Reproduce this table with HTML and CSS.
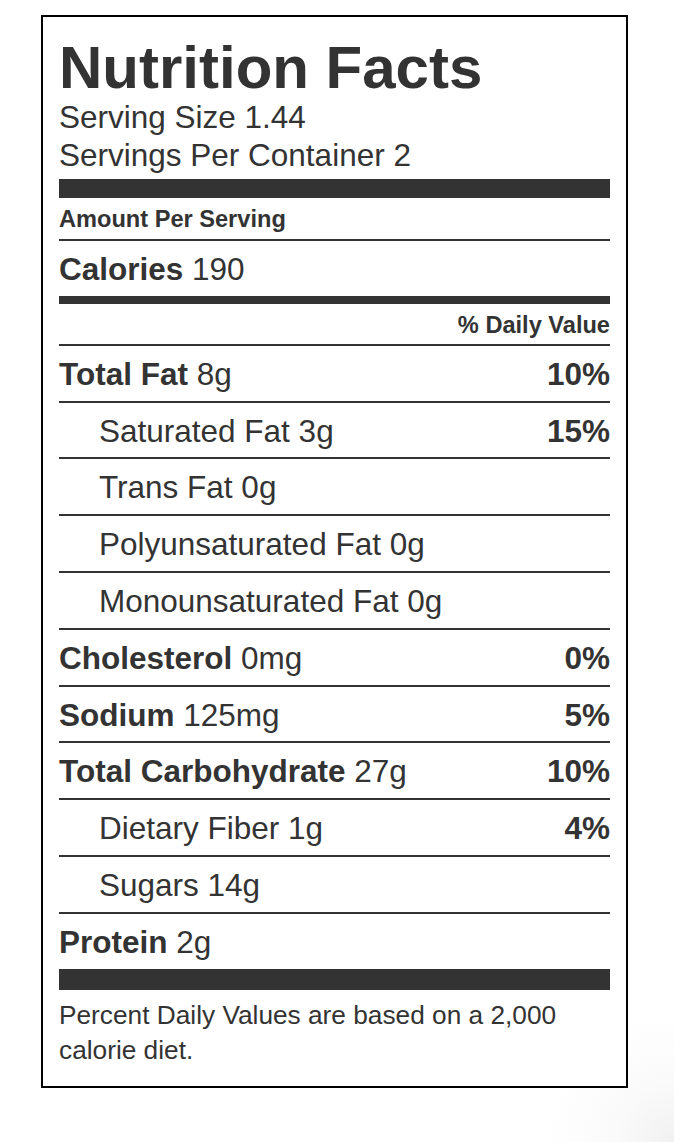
FILE: index.html
```html
<!DOCTYPE html>
<html lang="en">
<head>
<meta charset="utf-8">
<title>Nutrition Facts</title>
<link rel="stylesheet" href="styles.css">
</head>
<body>
<section class="label">
  <h1 class="title">Nutrition Facts</h1>
  <p class="serving">Serving Size 1.44</p>
  <p class="serving">Servings Per Container 2</p>
  <div class="bar bar-lg"></div>
  <div class="amount">Amount Per Serving</div>
  <div class="row"><span><b>Calories</b> 190</span></div>
  <div class="bar bar-md"></div>
  <div class="dv-head">% Daily Value</div>
  <div class="row"><span><b>Total Fat</b> 8g</span><b>10%</b></div>
  <div class="row sub"><span>Saturated Fat 3g</span><b>15%</b></div>
  <div class="row sub"><span>Trans Fat 0g</span></div>
  <div class="row sub"><span>Polyunsaturated Fat 0g</span></div>
  <div class="row sub"><span>Monounsaturated Fat 0g</span></div>
  <div class="row"><span><b>Cholesterol</b> 0mg</span><b>0%</b></div>
  <div class="row"><span><b>Sodium</b> 125mg</span><b>5%</b></div>
  <div class="row"><span><b>Total Carbohydrate</b> 27g</span><b>10%</b></div>
  <div class="row sub"><span>Dietary Fiber 1g</span><b>4%</b></div>
  <div class="row sub"><span>Sugars 14g</span></div>
  <div class="row"><span><b>Protein</b> 2g</span></div>
  <div class="bar bar-xl"></div>
  <p class="footnote">Percent Daily Values are based on a 2,000 calorie diet.</p>
</section>
</body>
</html>
```

FILE: styles.css
```css
html {
  background: radial-gradient(circle at 100% 100%, #f1f1f1 0, #fafafa 60px, #ffffff 130px);
  min-height: 100%;
}

body {
  margin: 0;
  padding: 15px 0 0 41px;
  font-family: "Liberation Sans", Arial, Helvetica, sans-serif;
  color: #333333;
}

.label {
  width: 551px;
  border: 2px solid #000000;
  background: #ffffff;
  padding: 21px 16px 18px 16px;
}

.title {
  margin: 0;
  font-size: 60px;
  line-height: 60px;
  font-weight: 700;
}

.serving {
  margin: 0;
  font-size: 31.5px;
  line-height: 38px;
}

.bar {
  background: #333333;
}

.bar-lg {
  height: 19px;
  margin-top: 5px;
}

.bar-md {
  height: 8px;
}

.bar-xl {
  height: 21px;
}

.amount {
  font-size: 23.6px;
  font-weight: 700;
  line-height: 30px;
  padding: 6px 0 5px 0;
}

.dv-head {
  font-size: 23.6px;
  font-weight: 700;
  line-height: 37px;
  padding-top: 3px;
  text-align: right;
}

.row {
  display: flex;
  justify-content: space-between;
  border-top: 2px solid #333333;
  height: 54.8px;
  font-size: 31.5px;
  line-height: 56px;
}

.row.sub {
  padding-left: 40px;
}

.footnote {
  margin: 0;
  padding-top: 8.6px;
  font-size: 26.25px;
  line-height: 35px;
}
```
